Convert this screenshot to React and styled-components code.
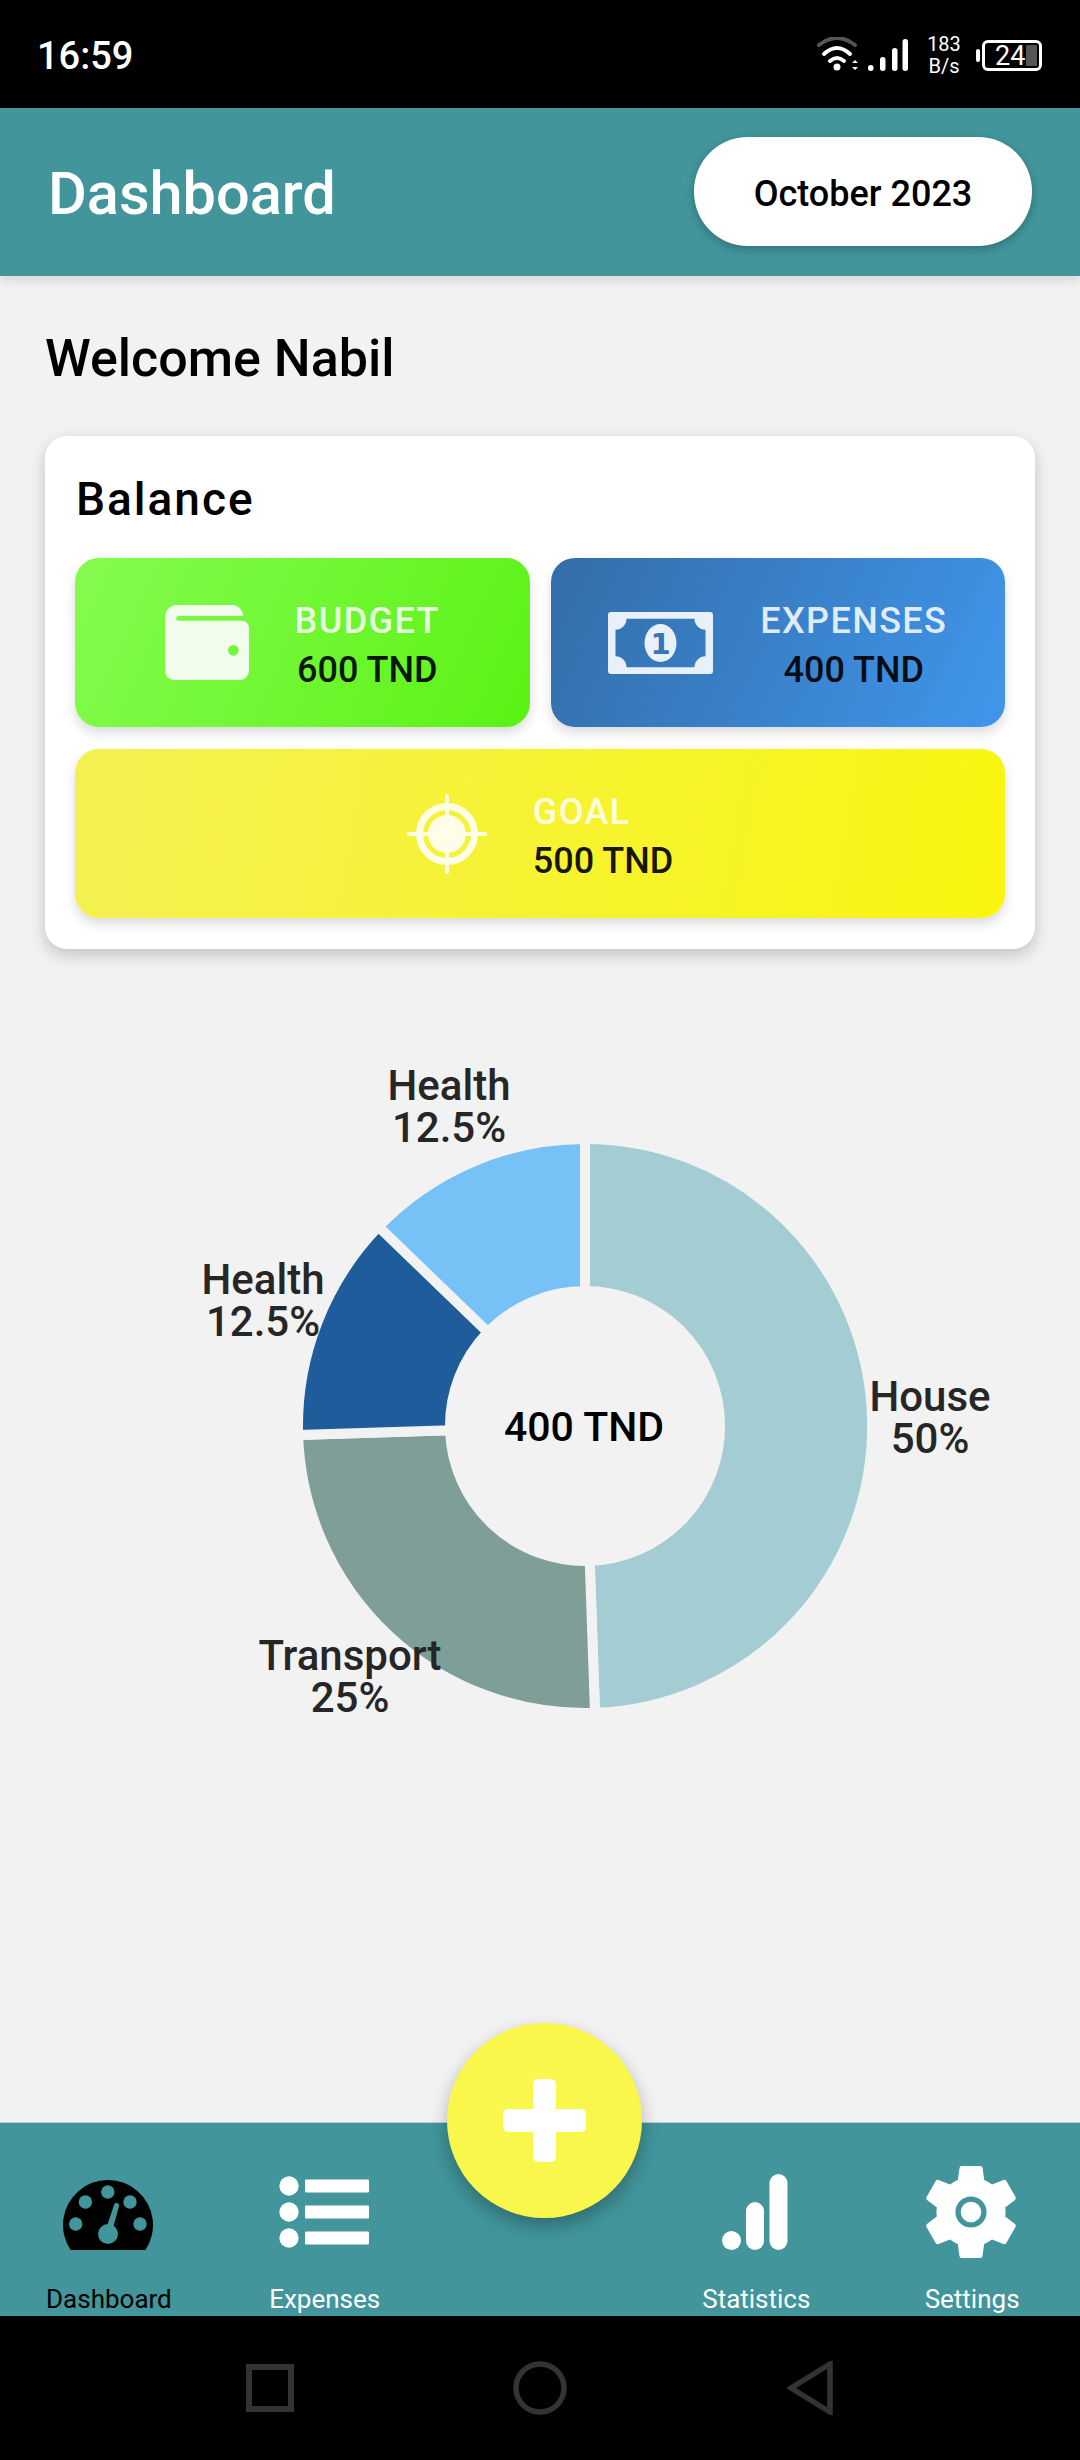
import React from 'react';
import styled, { createGlobalStyle } from 'styled-components';

const GlobalStyle = createGlobalStyle`
  html, body {
    margin: 0;
    padding: 0;
    background: #000;
  }
  * {
    box-sizing: border-box;
  }
`;

const Screen = styled.div`
  width: 1080px;
  height: 2460px;
  display: flex;
  flex-direction: column;
  background: #f2f2f2;
  font-family: Roboto, "Liberation Sans", sans-serif;
  overflow: hidden;
`;

const StatusBar = styled.div`
  height: 108px;
  flex: none;
  background: #000;
  color: #fff;
  display: flex;
  align-items: center;
  justify-content: space-between;
  padding: 2px 38px 0 37px;
`;

const Clock = styled.span`
  font-size: 38px;
  font-weight: 500;
  padding-top: 2px;
`;

const StatusIcons = styled.div`
  display: flex;
  align-items: center;
  gap: 8px;
`;

const NetSpeed = styled.div`
  width: 44px;
  font-size: 20px;
  line-height: 22px;
  text-align: center;
  margin: 0 8px 0 6px;
`;

const Battery = styled.div`
  position: relative;
  width: 60px;
  height: 31px;
  border: 3px solid #fff;
  border-radius: 6px;
  font-size: 27px;
  line-height: 26px;
  padding-left: 10px;
  &::before {
    content: '';
    position: absolute;
    left: -9px;
    top: 6px;
    width: 4px;
    height: 13px;
    border-radius: 2px;
    background: #fff;
  }
  &::after {
    content: '';
    position: absolute;
    right: 2px;
    top: 2px;
    bottom: 2px;
    width: 11px;
    border-radius: 1px;
    background: #555;
  }
`;

const Header = styled.header`
  height: 168px;
  flex: none;
  background: #41959b;
  display: flex;
  align-items: center;
  justify-content: space-between;
  padding: 0 48px 0 48px;
  box-shadow: 0 4px 10px rgba(0, 0, 0, 0.12);
  position: relative;
`;

const Title = styled.h1`
  margin: 0;
  padding-top: 4px;
  font-size: 59.5px;
  font-weight: 500;
  color: #fff;
`;

const MonthPill = styled.div`
  width: 338px;
  height: 109px;
  margin-top: -2px;
  padding-top: 5px;
  border-radius: 54px;
  background: #fff;
  display: flex;
  align-items: center;
  justify-content: center;
  font-size: 36px;
  font-weight: 500;
  color: #000;
  box-shadow: 0 3px 8px rgba(0, 0, 0, 0.25);
`;

const Content = styled.main`
  flex: 1;
  padding: 55px 45px 0;
`;

const Welcome = styled.h2`
  margin: 0 0 49px;
  font-size: 52px;
  line-height: 56px;
  font-weight: 500;
  color: #000;
`;

const Card = styled.section`
  height: 513px;
  background: #fff;
  border-radius: 22px;
  padding: 38px 30px 31px;
  box-shadow: 0 6px 16px rgba(0, 0, 0, 0.2);
`;

const CardTitle = styled.h3`
  margin: 0 0 34px 1px;
  font-size: 46px;
  line-height: 50px;
  font-weight: 500;
  letter-spacing: 2px;
  color: #000;
`;

const TileGrid = styled.div`
  display: grid;
  grid-template-columns: 1fr 1fr;
  grid-auto-rows: 169px;
  gap: 22px 21px;
`;

const Tile = styled.div`
  border-radius: 24px;
  display: flex;
  align-items: center;
  justify-content: center;
  gap: ${(p) => p.$gap}px;
  background: ${(p) => p.$bg};
  grid-column: ${(p) => (p.$wide ? '1 / -1' : 'auto')};
  box-shadow: 0 6px 12px rgba(0, 0, 0, 0.14);
`;

const TileText = styled.div`
  display: flex;
  flex-direction: column;
  align-items: ${(p) => (p.$left ? 'flex-start' : 'center')};
  gap: 10px;
  padding-top: 6px;
`;

const TileLabel = styled.span`
  font-size: 36px;
  line-height: 39px;
  letter-spacing: 1.4px;
  font-weight: 500;
  color: rgba(255, 255, 255, 0.85);
`;

const TileValue = styled.span`
  font-size: 36px;
  line-height: 39px;
  font-weight: 500;
  color: rgba(0, 0, 0, 0.92);
`;

const ChartWrap = styled.div`
  margin: 75px -45px 0;
  height: 700px;
`;

const ChartSvg = styled.svg`
  display: block;
`;

const ChartLabel = styled.text`
  font-size: 42px;
  font-weight: 500;
  fill: #262626;
  text-anchor: middle;
`;

const ChartCenter = styled.text`
  font-size: 41px;
  font-weight: 500;
  fill: #000;
  text-anchor: middle;
`;

const BottomNav = styled.nav`
  position: relative;
  height: 194px;
  flex: none;
  background: #41959b;
  display: grid;
  grid-template-columns: repeat(5, 1fr);
  padding: 41px 0 0 1px;
  border-top: 1px solid #b5cfd1;
`;

const NavItem = styled.div`
  display: flex;
  flex-direction: column;
  align-items: center;
`;

const NavIcon = styled.div`
  height: 96px;
  margin-left: -2px;
  display: flex;
  align-items: center;
  justify-content: center;
`;

const NavLabel = styled.span`
  margin-top: 24px;
  font-size: 26px;
  line-height: 30px;
  color: ${(p) => (p.$active ? '#000' : '#fff')};
`;

const Fab = styled.button`
  position: absolute;
  left: 447px;
  top: -100px;
  width: 195px;
  height: 195px;
  border: 0;
  padding: 0;
  border-radius: 50%;
  background: #f9f74c;
  box-shadow: 0 8px 18px rgba(0, 0, 0, 0.28);
  display: flex;
  align-items: center;
  justify-content: center;
`;

const SystemNav = styled.div`
  height: 144px;
  flex: none;
  background: #000;
  display: grid;
  grid-template-columns: 270px 270px 270px;
  justify-content: center;
  align-items: center;
  justify-items: center;
`;

// ring slices, angles in degrees clockwise from 12 o'clock
const SLICES = [
  { from: 0, to: 178, color: '#a3ccd3' },
  { from: 178, to: 268.2, color: '#7e9e97' },
  { from: 268.2, to: 314, color: '#1e5c9b' },
  { from: 314, to: 360, color: '#76c1f6' },
];

const LABELS = [
  { x: 930, y: 1396, name: 'House', pct: '50%' },
  { x: 350, y: 1655, name: 'Transport', pct: '25%' },
  { x: 263, y: 1279, name: 'Health', pct: '12.5%' },
  { x: 449, y: 1085, name: 'Health', pct: '12.5%' },
];

// chart svg starts at page y 1024
const CHART_TOP = 1024;
const CX = 585;
const CY = 1426 - CHART_TOP;

function slicePath(from, to, outer, inner) {
  const pt = (a, r) => {
    const t = (a * Math.PI) / 180;
    return `${(CX + r * Math.sin(t)).toFixed(2)} ${(CY - r * Math.cos(t)).toFixed(2)}`;
  };
  const large = to - from > 180 ? 1 : 0;
  return `M${pt(from, outer)} A${outer} ${outer} 0 ${large} 1 ${pt(to, outer)} L${pt(to, inner)} A${inner} ${inner} 0 ${large} 0 ${pt(from, inner)} Z`;
}

function Donut() {
  return (
    <ChartSvg width="1080" height="700" viewBox="0 0 1080 700">
      {SLICES.map((s) => (
        <path key={s.from} d={slicePath(s.from, s.to, 287, 135)} fill={s.color} stroke="#f2f2f2" strokeWidth="10" />
      ))}
      {LABELS.map((l) => (
        <g key={l.x}>
          <ChartLabel x={l.x} y={l.y - CHART_TOP + 15}>{l.name}</ChartLabel>
          <ChartLabel x={l.x} y={l.y - CHART_TOP + 57}>{l.pct}</ChartLabel>
        </g>
      ))}
      <ChartCenter x={584} y={CY + 15}>400 TND</ChartCenter>
    </ChartSvg>
  );
}

const WifiIcon = () => (
  <svg width="46" height="36" viewBox="0 0 46 36" fill="none" strokeLinecap="round">
    <path d="M5 8 Q23 -6 41 8" stroke="#555" strokeWidth="4" />
    <path d="M10 17 Q23 5 36 17" stroke="#fff" strokeWidth="4" />
    <path d="M16 24 Q23 18 30 24" stroke="#fff" strokeWidth="4" />
    <circle cx="23" cy="30" r="3.5" fill="#fff" />
    <path d="M38 26 l3 -3 l3 3z M38 30 l3 3 l3 -3z" fill="#fff" />
  </svg>
);

const SignalIcon = () => (
  <svg width="40" height="32" viewBox="0 0 40 32" fill="#fff">
    <rect x="0" y="26" width="5.5" height="6" rx="2.7" />
    <rect x="12" y="18" width="5.5" height="14" rx="2.7" />
    <rect x="24" y="9" width="5.5" height="23" rx="2.7" />
    <rect x="34.5" y="0" width="5.5" height="32" rx="2.7" />
  </svg>
);

const WalletIcon = () => (
  <svg width="84" height="75" viewBox="0 0 84 75">
    <path
      fill="#f1fcec"
      fillRule="evenodd"
      d="M12 0 H67 a11 11 0 0 1 11 11 H13.5 a2.4 2.4 0 0 0 0 4.8 H77 a7 7 0 0 1 7 7 V66 a9 9 0 0 1 -9 9 H9 a9 9 0 0 1 -9 -9 V12 a12 12 0 0 1 12 -12z M68.3 40 a5.3 5.3 0 1 0 0.01 0z"
    />
  </svg>
);

const BillIcon = () => (
  <svg width="105" height="62" viewBox="0 0 105 62">
    <path
      fill="#e8f0f9"
      fillRule="evenodd"
      d="M0 3 a3 3 0 0 1 3 -3 H102 a3 3 0 0 1 3 3 V59 a3 3 0 0 1 -3 3 H3 a3 3 0 0 1 -3 -3z M18.5 6.7 a11 11 0 0 1 -11 11 V44.3 a11 11 0 0 1 11 11 H86.5 a11 11 0 0 1 11 -11 V17.7 a11 11 0 0 1 -11 -11z"
    />
    <ellipse cx="52.5" cy="31" rx="16" ry="19" fill="#e8f0f9" />
    <text x="52.5" y="42" textAnchor="middle" fontFamily="'DejaVu Sans', sans-serif" fontWeight="700" fontSize="29" fill="#3674b5">1</text>
  </svg>
);

const TargetIcon = () => (
  <svg width="80" height="80" viewBox="0 0 80 80" fill="#fffde8">
    <circle cx="40" cy="40" r="27.5" fill="none" stroke="#fffde8" strokeWidth="7" />
    <circle cx="40" cy="40" r="19" />
    <rect x="38" y="0" width="4" height="80" rx="2" />
    <rect x="0" y="38" width="80" height="4" rx="2" />
  </svg>
);

const GaugeIcon = () => (
  <svg width="90" height="76" viewBox="0 -6 90 76">
    <path d="M7.6 70 A45 45 0 1 1 82.4 70z" fill="#000" />
    <g fill="#41959b">
      <circle cx="12.7" cy="44" r="6.7" />
      <circle cx="22.4" cy="22" r="6.7" />
      <circle cx="44.8" cy="12" r="6.7" />
      <circle cx="67" cy="22" r="6.7" />
      <circle cx="77" cy="44" r="6.7" />
      <circle cx="45" cy="54" r="10" />
      <path d="M51 25 a2.5 2.5 0 0 1 5 1 L49 52 H42z" />
    </g>
  </svg>
);

const ListIcon = () => (
  <svg width="90" height="72" viewBox="0 0 90 72" fill="#fff">
    <circle cx="10" cy="10" r="9.7" />
    <circle cx="10" cy="36" r="9.7" />
    <circle cx="10" cy="62" r="9.7" />
    <rect x="26" y="3.5" width="64" height="13" rx="1" />
    <rect x="26" y="29.5" width="64" height="13" rx="1" />
    <rect x="26" y="55.5" width="64" height="13" rx="1" />
  </svg>
);

const StatsIcon = () => (
  <svg width="66" height="76" viewBox="0 0 66 76" fill="#fff">
    <circle cx="9.5" cy="66.5" r="9.5" />
    <rect x="24" y="28" width="18" height="48" rx="9" />
    <rect x="47.5" y="0" width="18" height="76" rx="9" />
  </svg>
);

const GearIcon = () => (
  <svg width="96" height="96" viewBox="2.4 2 19.2 20">
    <path
      fill="#fff"
      d="M19.14 12.94c.04-.3.06-.61.06-.94 0-.32-.02-.64-.07-.94l2.03-1.58c.18-.14.23-.41.12-.61l-1.92-3.32c-.12-.22-.37-.29-.59-.22l-2.39.96c-.5-.38-1.03-.7-1.62-.94l-.36-2.54c-.04-.24-.24-.41-.48-.41h-3.84c-.24 0-.43.17-.47.41l-.36 2.54c-.59.24-1.13.57-1.62.94l-2.39-.96c-.22-.08-.47 0-.59.22L2.74 8.87c-.12.21-.08.47.12.61l2.03 1.58c-.05.3-.09.63-.09.94s.02.64.07.94l-2.03 1.58c-.18.14-.23.41-.12.61l1.92 3.32c.12.22.37.29.59.22l2.39-.96c.5.38 1.03.7 1.62.94l.36 2.54c.05.24.24.41.48.41h3.84c.24 0 .44-.17.47-.41l.36-2.54c.59-.24 1.13-.56 1.62-.94l2.39.96c.22.08.47 0 .59-.22l1.92-3.32c.12-.22.07-.47-.12-.61l-2.01-1.58z"
    />
    <circle cx="12" cy="12" r="2.7" fill="none" stroke="#41959b" strokeWidth="1.1" />
  </svg>
);

const PlusIcon = () => (
  <svg width="83" height="83" viewBox="0 0 83 83" fill="#fff">
    <rect x="30" y="0" width="23" height="83" rx="5" />
    <rect x="0" y="30" width="83" height="23" rx="5" />
  </svg>
);

const SquareKey = () => (
  <svg width="48" height="48" viewBox="0 0 48 48" fill="none" stroke="#333" strokeWidth="6">
    <rect x="3" y="3" width="42" height="42" />
  </svg>
);

const CircleKey = () => (
  <svg width="54" height="54" viewBox="0 0 54 54" fill="none" stroke="#333" strokeWidth="5.5">
    <circle cx="27" cy="27" r="24" />
  </svg>
);

const BackKey = () => (
  <svg width="46" height="54" viewBox="0 0 46 54" fill="none" stroke="#333" strokeWidth="5.5">
    <path d="M43 3 V51 L4 27z" />
  </svg>
);

const NAV = [
  { label: 'Dashboard', icon: <GaugeIcon />, active: true },
  { label: 'Expenses', icon: <ListIcon /> },
  null,
  { label: 'Statistics', icon: <StatsIcon /> },
  { label: 'Settings', icon: <GearIcon /> },
];

export default function App() {
  return (
    <Screen>
      <GlobalStyle />
      <StatusBar>
        <Clock>16:59</Clock>
        <StatusIcons>
          <WifiIcon />
          <SignalIcon />
          <NetSpeed>183<br />B/s</NetSpeed>
          <Battery>24</Battery>
        </StatusIcons>
      </StatusBar>

      <Header>
        <Title>Dashboard</Title>
        <MonthPill>October 2023</MonthPill>
      </Header>

      <Content>
        <Welcome>Welcome Nabil</Welcome>
        <Card>
          <CardTitle>Balance</CardTitle>
          <TileGrid>
            <Tile $gap={46} $bg="linear-gradient(115deg, #85fb4f, #5af215)">
              <WalletIcon />
              <TileText>
                <TileLabel>BUDGET</TileLabel>
                <TileValue>600 TND</TileValue>
              </TileText>
            </Tile>
            <Tile $gap={47} $bg="linear-gradient(115deg, #336da8, #4096ec)">
              <BillIcon />
              <TileText>
                <TileLabel>EXPENSES</TileLabel>
                <TileValue>400 TND</TileValue>
              </TileText>
            </Tile>
            <Tile $wide $gap={46} $bg="linear-gradient(100deg, #f3f054, #f9f50f)">
              <TargetIcon />
              <TileText $left>
                <TileLabel>GOAL</TileLabel>
                <TileValue>500 TND</TileValue>
              </TileText>
            </Tile>
          </TileGrid>
        </Card>
        <ChartWrap>
          <Donut />
        </ChartWrap>
      </Content>

      <BottomNav>
        {NAV.map((item, i) =>
          item ? (
            <NavItem key={item.label}>
              <NavIcon>{item.icon}</NavIcon>
              <NavLabel $active={item.active}>{item.label}</NavLabel>
            </NavItem>
          ) : (
            <div key={i} />
          )
        )}
        <Fab>
          <PlusIcon />
        </Fab>
      </BottomNav>

      <SystemNav>
        <SquareKey />
        <CircleKey />
        <BackKey />
      </SystemNav>
    </Screen>
  );
}
